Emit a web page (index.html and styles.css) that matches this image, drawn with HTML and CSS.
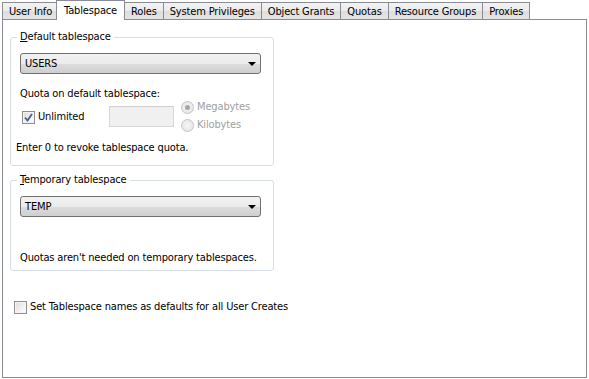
FILE: index.html
```html
<!DOCTYPE html>
<html>
<head lang="en">
    <meta charset="UTF-8">
    <title>User - Tablespace</title>
    <link rel="stylesheet" href="styles.css">
</head>
<body>
<div class="tabs">
    <span class="tab">User Info</span>
    <span class="tab active">Tablespace</span>
    <span class="tab">Roles</span>
    <span class="tab">System Privileges</span>
    <span class="tab">Object Grants</span>
    <span class="tab">Quotas</span>
    <span class="tab">Resource Groups</span>
    <span class="tab">Proxies</span>
</div>
<section class="panel">
    <fieldset class="group group-default">
        <legend><u>D</u>efault tablespace</legend>
        <div class="combo"><span>USERS</span><i class="arrow"></i></div>
        <div class="label quota-label">Quota on default tablespace:</div>
        <div class="quota-row">
            <label class="check-line unlimited">
                <span class="check checked">
                    <svg width="9" height="9" viewBox="0 0 9 9"><path d="M1 4.5 L3.5 7.5 L8 1" fill="none" stroke="#4a5d94" stroke-width="1.8"/></svg>
                </span>
                <span>Unlimited</span>
            </label>
            <span class="field"></span>
            <div class="radios">
                <label class="radio-line"><span class="radio on"></span>Megabytes</label>
                <label class="radio-line"><span class="radio"></span>Kilobytes</label>
            </div>
        </div>
        <div class="label hint">Enter 0 to revoke tablespace quota.</div>
    </fieldset>

    <fieldset class="group group-temp">
        <legend><u>T</u>emporary tablespace</legend>
        <div class="combo"><span>TEMP</span><i class="arrow"></i></div>
        <div class="label temp-note">Quotas aren't needed on temporary tablespaces.</div>
    </fieldset>

    <label class="check-line defaults">
        <span class="check"></span>
        <span>Set Tablespace names as defaults for all User Creates</span>
    </label>
</section>
</body>
</html>
```

FILE: styles.css
```css
html, body{
    margin: 0;
    padding: 0;
    background: #fff;
    font-family: "DejaVu Sans Condensed", "DejaVu Sans", sans-serif;
    font-size: 11px;
    letter-spacing: -0.15px;
    color: #000;
    overflow: hidden;
}

/* tab strip */
.tabs{
    display: flex;
    align-items: flex-end;
    height: 19px;
    padding-left: 2px;
}

.tab{
    position: relative;
    height: 16px;
    line-height: 17px;
    padding: 0 6px;
    margin-right: -1px;
    border: 1px solid #898c95;
    border-bottom: none;
    background: linear-gradient(#f3f3f3, #ebebeb 50%, #dddddd 51%, #e5e5e5);
    white-space: nowrap;
}

.tab.active{
    z-index: 1;
    height: 19px;
    line-height: 19px;
    margin: 0 -2px -1px -2px;
    padding: 0 7px;
    background: #fff;
}

.tab.active + .tab{
    margin-left: 1px;
}

.panel{
    box-sizing: border-box;
    height: 359px;
    margin: 0 2px;
    padding: 0 0 0 7px;
    border: 1px solid #898c95;
    background: #fff;
    overflow: hidden;
}

/* group boxes */
.group{
    box-sizing: border-box;
    width: 264px;
    margin: 10px 0 0 0;
    padding: 0 12px 11px 9px;
    border: 1px solid #d5dfe5;
    border-radius: 3px;
    min-inline-size: 0;
}

.group legend{
    padding: 0 3px;
    margin-left: -3px;
    line-height: 14px;
}

.group-temp{
    margin-top: 7px;
    padding-bottom: 6px;
}

.label{
    line-height: 13px;
    white-space: nowrap;
}

/* combo box */
.combo{
    box-sizing: border-box;
    display: flex;
    align-items: center;
    justify-content: space-between;
    height: 21px;
    margin-top: 9px;
    padding: 0 4px 0 4px;
    border: 1px solid #707070;
    border-radius: 3px;
    background: linear-gradient(#f2f2f2, #ebebeb 50%, #dddddd 50%, #cfcfcf);
}

.arrow{
    width: 0;
    height: 0;
    border-left: 4px solid transparent;
    border-right: 4px solid transparent;
    border-top: 4px solid #000;
}

.quota-label{
    margin-top: 13px;
}

.quota-row{
    display: flex;
    align-items: center;
}

.check-line{
    display: flex;
    align-items: center;
    line-height: 14px;
    white-space: nowrap;
}

.unlimited{
    width: 87px;
    padding-left: 2px;
    padding-top: 2px;
}

.check{
    box-sizing: border-box;
    display: flex;
    align-items: center;
    justify-content: center;
    width: 13px;
    height: 13px;
    margin-right: 3px;
    border: 1px solid #8e8f8f;
    background: linear-gradient(135deg, #dcdcdc, #f6f6f6 70%, #fff);
    box-shadow: inset 0 0 0 1px #f4f4f4;
}

.field{
    box-sizing: border-box;
    width: 65px;
    height: 21px;
    border: 1px solid #d8d8d8;
    border-top-color: #cfcfcf;
    background: #f0f0f0;
}

.radios{
    display: flex;
    flex-direction: column;
    gap: 4px;
    margin-left: 7px;
    color: #a0a0a0;
}

.radio-line{
    display: flex;
    align-items: center;
    line-height: 14px;
}

.radio{
    box-sizing: border-box;
    display: flex;
    align-items: center;
    justify-content: center;
    width: 13px;
    height: 13px;
    margin-right: 3px;
    border: 1px solid #c5c5c5;
    border-radius: 50%;
    background: radial-gradient(#f6f6f6, #e2e2e2);
}

.radio.on::after{
    content: "";
    width: 5px;
    height: 5px;
    border-radius: 50%;
    background: #a6a6a6;
}

.hint{
    margin: 9px 0 0 -4px;
}

.temp-note{
    margin-top: 34px;
}

.defaults{
    margin: 29px 0 0 4px;
}

.defaults .check{
    margin-right: 3px;
}
```
